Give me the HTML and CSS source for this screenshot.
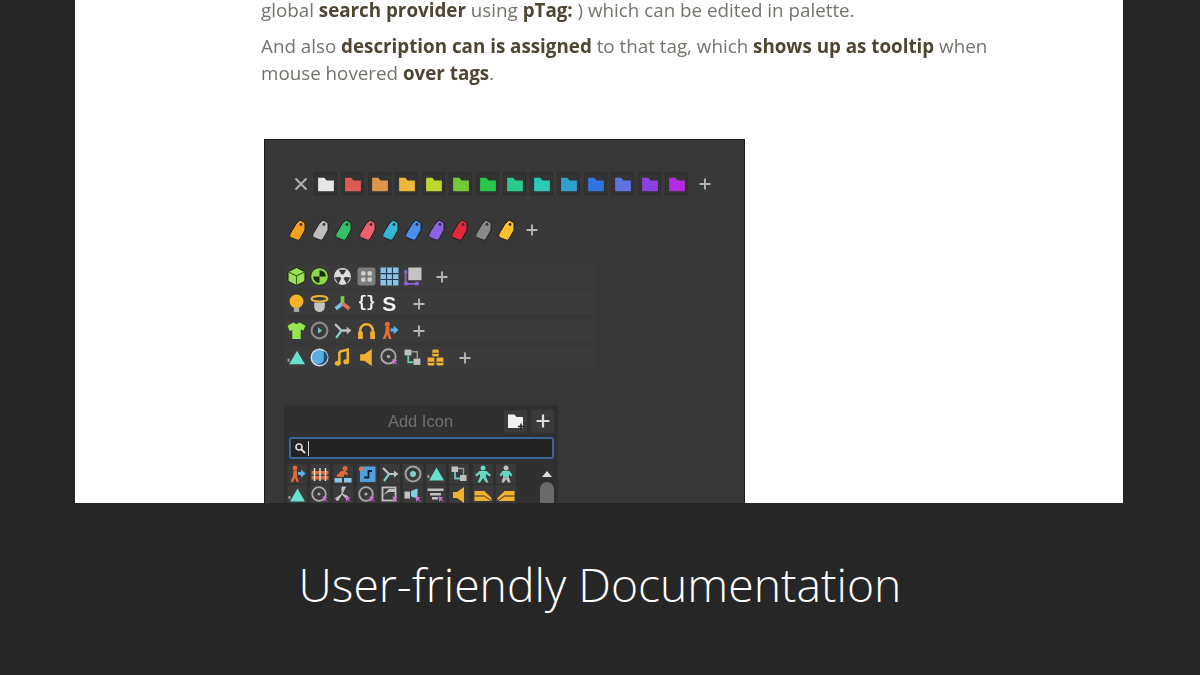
FILE: index.html
```html
<!DOCTYPE html>
<html lang="en">
<head>
<meta charset="utf-8">
<title>User-friendly Documentation</title>
<link rel="stylesheet" href="styles.css">
</head>
<body>
<svg class="defs" width="0" height="0" aria-hidden="true">
  <symbol id="folder" viewBox="0 0 16 16"><path d="M1 2.500h5.500l2 2.400H15V14.500H1z" fill="currentColor"/></symbol>
  <symbol id="tag" viewBox="0 0 20 24"><path d="M13 2l5 3v7l-5 9q-1 1.500-3 1l-6-2.500q-2-1-1-3.500l6-10z" fill="currentColor" stroke="#111" stroke-width=".8"/><circle cx="14" cy="6.500" r="1.400" fill="#333"/></symbol>
  <symbol id="cube" viewBox="0 0 18 18"><path d="M9 .5l8 4v9l-8 4-8-4v-9z" fill="#9be04f" stroke="#111" stroke-width=".8"/><path d="M1 4.500L9 8.500l8-4M9 8.500v9" fill="none" stroke="#35551a" stroke-width="1"/></symbol>
  <symbol id="nuke" viewBox="0 0 18 18"><circle cx="9" cy="9" r="8.300" fill="#8ed64a" stroke="#111" stroke-width=".6"/><path d="M9 9V3a6 6 0 0 1 6 6zM9 9v6a6 6 0 0 1-6-6z" fill="#1d2a14"/></symbol>
  <symbol id="rad" viewBox="0 0 18 18"><circle cx="9" cy="9" r="8" fill="#ddd"/><path d="M9 9L5.500 2.500h7zM9 9l7.500 1-3.500 6zM9 9l-7.500 1 3.500 6z" fill="#3a3a3a"/><circle cx="9" cy="9" r="2.200" fill="#ddd"/></symbol>
  <symbol id="grid4" viewBox="0 0 18 18"><rect x=".5" y=".5" width="17" height="17" rx="2" fill="#7c7c7c"/><rect x="4" y="4" width="4" height="4" rx="1" fill="#cfcfcf"/><rect x="10" y="4" width="4" height="4" rx="1" fill="#cfcfcf"/><rect x="4" y="10" width="4" height="4" rx="1" fill="#cfcfcf"/><rect x="10" y="10" width="4" height="4" rx="1" fill="#cfcfcf"/></symbol>
  <symbol id="grid9" viewBox="0 0 18 18"><rect x=".5" y=".5" width="17" height="17" fill="#8cc4e8"/><path d="M6.200 .5v17M11.800 .5v17M.5 6.200h17M.5 11.800h17" stroke="#1f3a52" stroke-width="1.100"/></symbol>
  <symbol id="corner" viewBox="0 0 18 18"><path d="M2.500 5v11h11" fill="none" stroke="#8a63d2" stroke-width="1.800"/><rect x="1" y="14" width="3.500" height="3.500" fill="#8a63d2"/><rect x="11.500" y="14" width="3.500" height="3.500" fill="#8a63d2"/><rect x="1" y="3" width="3" height="3" fill="#8a63d2"/><rect x="5" y=".5" width="12.500" height="12" fill="#c4c4c4"/></symbol>
  <symbol id="bulb" viewBox="0 0 18 18"><circle cx="9" cy="7" r="6.500" fill="#f5b427"/><rect x="6.500" y="13" width="5" height="4" fill="#aaa"/></symbol>
  <symbol id="halo" viewBox="0 0 18 18"><path d="M4 8h10v4a5 5 0 0 1-10 0z" fill="#c4c4c4"/><ellipse cx="9" cy="4.500" rx="7.500" ry="2.600" fill="none" stroke="#e6b23a" stroke-width="2"/></symbol>
  <symbol id="emit" viewBox="0 0 18 18"><path d="M9 9V2" stroke="#7ec850" stroke-width="3.500"/><path d="M9 9l-6.500 5" stroke="#6fc3e8" stroke-width="3.500"/><path d="M9 9l6.500 5" stroke="#e0705a" stroke-width="3.500"/></symbol>
  <symbol id="shirt" viewBox="0 0 18 18"><path d="M6 1.500l3 1.500 3-1.500 5.500 3-2 4.500-2.500-1v9H5V8.500L2.500 9.500.5 4.500z" fill="#95e64f"/></symbol>
  <symbol id="play" viewBox="0 0 18 18"><circle cx="9" cy="9" r="7.500" fill="none" stroke="#8c8c8c" stroke-width="2"/><path d="M7.500 6l4 3-4 3z" fill="#6fc3c8"/></symbol>
  <symbol id="split" viewBox="0 0 18 18"><path d="M2 3l6 6h6" fill="none" stroke="#c0c0c0" stroke-width="2.200"/><path d="M3 16l5-7" fill="none" stroke="#7fd0c8" stroke-width="2.200"/><path d="M13 5.500l4.500 3.500-4.500 3.500z" fill="#c0c0c0"/></symbol>
  <symbol id="phones" viewBox="0 0 18 18"><path d="M3 12V9a6 6 0 0 1 12 0v3" fill="none" stroke="#f0b030" stroke-width="2.400"/><rect x="1" y="10" width="4.500" height="7" fill="#f0b030"/><rect x="12.500" y="10" width="4.500" height="7" fill="#f0b030"/></symbol>
  <symbol id="runner" viewBox="0 0 18 18"><circle cx="7" cy="3" r="2.400" fill="#e06a3a"/><path d="M5.500 5.500h3.500v6l2 5.500H8.500L7 13l-2 4H2.500L5 11z" fill="#e06a3a"/><path d="M10 7h3V4.500l4.500 4-4.500 4V10h-3z" fill="#59b4e8"/></symbol>
  <symbol id="tri" viewBox="0 0 18 18"><path d="M9.500 2.500l7.500 13H2z" fill="#66e0cc"/><rect x=".5" y="10" width="2" height="3" fill="#999"/></symbol>
  <symbol id="disc" viewBox="0 0 18 18"><circle cx="9" cy="9" r="8.500" fill="#e0e0e0"/><circle cx="9" cy="9" r="7.200" fill="#5aaee4"/><path d="M13 2.500a7 7 0 0 1-7 12.500 7 7 0 0 0 7-3z" fill="#1f4f78"/></symbol>
  <symbol id="note" viewBox="0 0 18 18"><path d="M6 3.500l8-2v11" fill="none" stroke="#f0b030" stroke-width="2.400"/><path d="M6 3.500v11" stroke="#f0b030" stroke-width="2.400"/><ellipse cx="4.500" cy="14.500" rx="2.800" ry="2.400" fill="#f0b030"/><ellipse cx="12.500" cy="13" rx="2.800" ry="2.400" fill="#f0b030"/></symbol>
  <symbol id="speaker" viewBox="0 0 18 18"><path d="M3 6h4l7-5v16l-7-5H3z" fill="#f0b030"/></symbol>
  <symbol id="pinc" viewBox="0 0 18 18"><circle cx="8" cy="8" r="6.800" fill="none" stroke="#aaa" stroke-width="1.800"/><circle cx="8" cy="8" r="1.600" fill="#aaa"/><path d="M11.500 10.500l5 1-2 1.500 2.500 3-3.500-2-1 2.500z" fill="#d070d0"/></symbol>
  <symbol id="nodes" viewBox="0 0 18 18"><rect x="1.500" y="1.500" width="6.500" height="5.500" fill="#c0c0c0"/><rect x="10" y="10" width="6.500" height="6" fill="#c0c0c0"/><path d="M5 7v6.500h5" fill="none" stroke="#66c8b8" stroke-width="1.800"/><path d="M8 3.500h5.500V10" fill="none" stroke="#999" stroke-width="1.400"/></symbol>
  <symbol id="tree" viewBox="0 0 18 18"><rect x="6" y="1.500" width="6" height="6.500" rx="1" fill="#f0b030"/><rect x="1.500" y="9" width="6.500" height="7.500" rx="1" fill="#f0b030"/><rect x="10" y="9" width="6.500" height="7.500" rx="1" fill="#f0b030"/><path d="M2 13.500h5.500M10.500 13.500H16M6.500 5h5" stroke="#333" stroke-width="1"/></symbol>
  <symbol id="fence" viewBox="0 0 18 18"><rect x=".5" y="6" width="17" height="3.500" fill="#e06a3a"/><rect x=".5" y="11" width="17" height="3.500" fill="#e06a3a"/><path d="M3.500 3v13M9 3v13M14.500 3v13" stroke="#e8e0d0" stroke-width="1.500"/></symbol>
  <symbol id="jump" viewBox="0 0 18 18"><circle cx="11" cy="3.500" r="2.500" fill="#e06a3a"/><path d="M2 11l5-5h4.500l3 3-2 1-2-1-1 3H4z" fill="#e06a3a"/><rect x=".5" y="13" width="7.500" height="4.500" fill="#8cc4e8"/><rect x="10" y="13" width="7.500" height="4.500" fill="#8cc4e8"/></symbol>
  <symbol id="bluebox" viewBox="0 0 18 18"><rect x="2" y="1.500" width="15.500" height="15.500" fill="#4fa0dc"/><path d="M6 12.500h4.500V6H14" fill="none" stroke="#123" stroke-width="1.800"/><circle cx="3" cy="4" r="2.200" fill="#e07a50"/></symbol>
  <symbol id="ring" viewBox="0 0 18 18"><circle cx="9" cy="9" r="7.500" fill="none" stroke="#a0a0a0" stroke-width="2"/><circle cx="9" cy="9" r="3" fill="#7fd0c8"/></symbol>
  <symbol id="person" viewBox="0 0 18 18"><circle cx="9" cy="3" r="2.500" fill="#66d8c4"/><path d="M5.500 6h7l4.500 4-1.500 1.500L12 9v3l2.500 5.500h-2.500l-3-4.500-3 4.500H3.500L6 12V9l-3.500 2.500L1 10z" fill="#66d8c4"/></symbol>
  <symbol id="person2" viewBox="0 0 18 18"><circle cx="9" cy="3" r="2.500" fill="#c0c0c0"/><path d="M5.500 6h7l3 4-1.500 1.500L12 9v3.500H6V9l-2 2.500L2.500 10z" fill="#66d8c4"/><path d="M6 12.500h6l1.500 5h-2.500l-2-3.500-2 3.500H4.500z" fill="#c0c0c0"/></symbol>
  <symbol id="fanpin" viewBox="0 0 18 18"><path d="M8 8V1h3.500zM8 8l-6.500 4.500 2 2.500zM8 8l6 2.500-2 2z" fill="#c0c0c0" stroke="#c0c0c0"/><path d="M11.500 10.500l5 1-2 1.500 2.500 3-3.500-2-1 2.500z" fill="#d070d0"/></symbol>
  <symbol id="sqpin" viewBox="0 0 18 18"><rect x="1.500" y="1.500" width="13" height="13" fill="none" stroke="#c0c0c0" stroke-width="1.800"/><path d="M2 9l6-6h6v3H8z" fill="#c0c0c0"/><path d="M11.500 10.500l5 1-2 1.500 2.500 3-3.500-2-1 2.500z" fill="#d070d0"/></symbol>
  <symbol id="campin" viewBox="0 0 18 18"><rect x=".5" y="5.500" width="5.500" height="7" fill="#c0c0c0"/><path d="M7 5l6.500-2.500v10L7 10.500z" fill="#7fd0e0"/><path d="M11.500 10.500l5 1-2 1.500 2.500 3-3.500-2-1 2.500z" fill="#d070d0"/></symbol>
  <symbol id="listpin" viewBox="0 0 18 18"><path d="M.5 2.500h16V5H.5zM3 7h11v2.500H3zM5 11h6v2.500H5z" fill="#c0c0c0"/><path d="M11.500 10.500l5 1-2 1.500 2.500 3-3.500-2-1 2.500z" fill="#d070d0"/></symbol>
  <symbol id="wedge1" viewBox="0 0 18 18"><path d="M.5 5h10l7 7v3H.5z" fill="#f0b030"/><path d="M.5 10h10l7 5" fill="none" stroke="#333" stroke-width="1"/></symbol>
  <symbol id="wedge2" viewBox="0 0 18 18"><path d="M17.500 5h-10l-7 7v3h17z" fill="#f0b030"/><path d="M17.500 10h-10l-7 5" fill="none" stroke="#333" stroke-width="1"/></symbol>
  <symbol id="lens" viewBox="0 0 12 12"><circle cx="5" cy="5" r="3" fill="none" stroke="#ddd" stroke-width="1.600"/><path d="M7 7l4 4" stroke="#ddd" stroke-width="2"/></symbol>
  <symbol id="folderadd" viewBox="0 0 18 18"><path d="M1 2.500h6.500l2 2.500H16v11H1z" fill="#f0f0f0"/><path d="M14 11.500v6M11 14.500h6" stroke="#222" stroke-width="1.600"/></symbol>
  <symbol id="plus" viewBox="0 0 12 12"><path d="M6 .5v11M.5 6h11" stroke="currentColor" stroke-width="1.900"/></symbol>
  <symbol id="cross" viewBox="0 0 14 14"><path d="M1.500 1.500l11 11M12.500 1.500l-11 11" stroke="currentColor" stroke-width="1.900"/></symbol>
</svg>

<main class="page">
  <p class="para para-first">global <b>search provider</b> using <b>pTag:</b> ) which can be edited in palette.</p>
  <p class="para">And also <b>description can is assigned</b> to that tag, which <b>shows up as tooltip</b> when<br>mouse hovered <b>over tags</b>.</p>

  <section class="panel">
    <div class="folders">
      <svg class="cross"><use href="#cross"/></svg>
      <span class="fbox c0"><svg><use href="#folder"/></svg></span>
      <span class="fbox c1"><svg><use href="#folder"/></svg></span>
      <span class="fbox c2"><svg><use href="#folder"/></svg></span>
      <span class="fbox c3"><svg><use href="#folder"/></svg></span>
      <span class="fbox c4"><svg><use href="#folder"/></svg></span>
      <span class="fbox c5"><svg><use href="#folder"/></svg></span>
      <span class="fbox c6"><svg><use href="#folder"/></svg></span>
      <span class="fbox c7"><svg><use href="#folder"/></svg></span>
      <span class="fbox c8"><svg><use href="#folder"/></svg></span>
      <span class="fbox c9"><svg><use href="#folder"/></svg></span>
      <span class="fbox c10"><svg><use href="#folder"/></svg></span>
      <span class="fbox c11"><svg><use href="#folder"/></svg></span>
      <span class="fbox c12"><svg><use href="#folder"/></svg></span>
      <span class="fbox c13"><svg><use href="#folder"/></svg></span>
      <svg class="plus"><use href="#plus"/></svg>
    </div>

    <div class="tags">
      <svg class="t0"><use href="#tag"/></svg>
      <svg class="t1"><use href="#tag"/></svg>
      <svg class="t2"><use href="#tag"/></svg>
      <svg class="t3"><use href="#tag"/></svg>
      <svg class="t4"><use href="#tag"/></svg>
      <svg class="t5"><use href="#tag"/></svg>
      <svg class="t6"><use href="#tag"/></svg>
      <svg class="t7"><use href="#tag"/></svg>
      <svg class="t8"><use href="#tag"/></svg>
      <svg class="t9"><use href="#tag"/></svg>
      <svg class="plus"><use href="#plus"/></svg>
    </div>

    <div class="iconrows">
      <div class="irow">
        <svg class="ic"><use href="#cube"/></svg>
        <svg class="ic"><use href="#nuke"/></svg>
        <svg class="ic"><use href="#rad"/></svg>
        <svg class="ic"><use href="#grid4"/></svg>
        <svg class="ic"><use href="#grid9"/></svg>
        <svg class="ic"><use href="#corner"/></svg>
        <svg class="plus"><use href="#plus"/></svg>
      </div>
      <div class="irow">
        <svg class="ic"><use href="#bulb"/></svg>
        <svg class="ic"><use href="#halo"/></svg>
        <svg class="ic"><use href="#emit"/></svg>
        <span class="ic glyph">{}</span>
        <span class="ic glyph glyph-s">S</span>
        <svg class="plus"><use href="#plus"/></svg>
      </div>
      <div class="irow">
        <svg class="ic"><use href="#shirt"/></svg>
        <svg class="ic"><use href="#play"/></svg>
        <svg class="ic"><use href="#split"/></svg>
        <svg class="ic"><use href="#phones"/></svg>
        <svg class="ic"><use href="#runner"/></svg>
        <svg class="plus"><use href="#plus"/></svg>
      </div>
      <div class="irow">
        <svg class="ic"><use href="#tri"/></svg>
        <svg class="ic"><use href="#disc"/></svg>
        <svg class="ic"><use href="#note"/></svg>
        <svg class="ic"><use href="#speaker"/></svg>
        <svg class="ic"><use href="#pinc"/></svg>
        <svg class="ic"><use href="#nodes"/></svg>
        <svg class="ic"><use href="#tree"/></svg>
        <svg class="plus"><use href="#plus"/></svg>
      </div>
    </div>

    <div class="adder">
      <div class="adder-head">
        <span class="adder-title">Add Icon</span>
        <span class="adder-btn"><svg class="btn-folder"><use href="#folderadd"/></svg></span>
        <span class="adder-btn"><svg class="btn-plus"><use href="#plus"/></svg></span>
      </div>
      <div class="field"><svg class="lens"><use href="#lens"/></svg><span class="caret"></span></div>
      <div class="picker">
        <div class="pgrid">
          <span class="cell"><svg><use href="#runner"/></svg></span>
          <span class="cell"><svg><use href="#fence"/></svg></span>
          <span class="cell"><svg><use href="#jump"/></svg></span>
          <span class="cell"><svg><use href="#bluebox"/></svg></span>
          <span class="cell"><svg><use href="#split"/></svg></span>
          <span class="cell"><svg><use href="#ring"/></svg></span>
          <span class="cell"><svg><use href="#tri"/></svg></span>
          <span class="cell"><svg><use href="#nodes"/></svg></span>
          <span class="cell"><svg><use href="#person"/></svg></span>
          <span class="cell"><svg><use href="#person2"/></svg></span>
          <span class="cell"><svg><use href="#tri"/></svg></span>
          <span class="cell"><svg><use href="#pinc"/></svg></span>
          <span class="cell"><svg><use href="#fanpin"/></svg></span>
          <span class="cell"><svg><use href="#pinc"/></svg></span>
          <span class="cell"><svg><use href="#sqpin"/></svg></span>
          <span class="cell"><svg><use href="#campin"/></svg></span>
          <span class="cell"><svg><use href="#listpin"/></svg></span>
          <span class="cell"><svg><use href="#speaker"/></svg></span>
          <span class="cell"><svg><use href="#wedge1"/></svg></span>
          <span class="cell"><svg><use href="#wedge2"/></svg></span>
        </div>
        <div class="scroll"><span class="scroll-up"></span><span class="scroll-thumb"></span></div>
      </div>
    </div>
  </section>
</main>

<footer class="caption">User-friendly Documentation</footer>
</body>
</html>
```

FILE: styles.css
```css
* { box-sizing: border-box; }
html, body { margin: 0; height: 100%; }
body {
  width: 1200px;
  height: 675px;
  overflow: hidden;
  background: #262626;
  display: flex;
  flex-direction: column;
  align-items: flex-start;
}
.defs { display: block; height: 0; }
.page {
  width: 1048px;
  height: 503px;
  margin-left: 75px;
  flex: none;
  background: #fff;
  overflow: hidden;
  padding-left: 186px;
}
.para {
  margin: 0 0 9px;
  font: 18.8px/27px "Open Sans", sans-serif;
  color: #75726c;
  filter: blur(.5px);
}
.para b { font-weight: 700; color: #4e4632; }
.para-first { margin-top: -3px; }

.panel {
  width: 481px;
  height: 420px;
  margin: 52px 0 0 3px;
  background: #383838;
  border: 1px solid #1c1c1c;
  border-bottom: 0;
  padding: 32px 0 0 19px;
  filter: blur(.6px);
}
.plus { width: 12px; height: 12px; color: #b5b5b5; flex: none; }
.cross { width: 14px; height: 14px; color: #b5b5b5; flex: none; margin-right: 2px; }

.folders { display: flex; align-items: center; gap: 4px; height: 23px; padding-left: 10px; }
.fbox {
  width: 23px;
  height: 23px;
  flex: none;
  display: flex;
  align-items: center;
  justify-content: center;
  background: #333;
  border: 1px solid #2e2e2e;
}
.fbox svg { width: 18px; height: 18px; }
.folders .plus { margin-left: 7px; }
.c0 { color: #e8e8e8; } .c1 { color: #dc5a50; } .c2 { color: #e0954f; } .c3 { color: #eeb93a; }
.c4 { color: #bfd62f; } .c5 { color: #72c934; } .c6 { color: #27c84a; } .c7 { color: #2cc98c; }
.c8 { color: #2cc9b8; } .c9 { color: #2f9fd0; } .c10 { color: #2f74e0; } .c11 { color: #5f74e0; }
.c12 { color: #8a42e0; } .c13 { color: #b42ae0; }

.tags { display: flex; align-items: center; gap: 3.2px; height: 24px; margin-top: 23px; padding-left: 3px; }
.tags svg:not(.plus) { width: 20px; height: 24px; flex: none; }
.tags .plus { margin-left: 7px; }
.t0 { color: #f5a11e; } .t1 { color: #bdbdbd; } .t2 { color: #35bf68; } .t3 { color: #f0606c; }
.t4 { color: #35b4d6; } .t5 { color: #4a8fee; } .t6 { color: #8a62e0; } .t7 { color: #e02a3c; }
.t8 { color: #8a8a8a; } .t9 { color: #f8c22e; }

.iconrows { display: flex; flex-direction: column; gap: 4px; width: 312px; margin-top: 23px; }
.irow { display: flex; align-items: center; gap: 4.2px; height: 23px; padding-left: 3px; background: #3b3b3b; }
.ic { width: 19px; height: 19px; flex: none; }
.glyph {
  display: flex;
  align-items: center;
  justify-content: center;
  font: 700 16px/19px "Liberation Mono", monospace;
  color: #f2f2f2;
  letter-spacing: -1px;
}
.glyph-s { font: 700 21px/19px "Liberation Sans", sans-serif; letter-spacing: 0; }
.irow .plus { margin-left: 10px; }

.adder { width: 274px; height: 120px; margin-top: 36px; background: #303030; padding: 0 4px 0 5px; }
.adder-head { display: flex; align-items: center; gap: 4px; height: 32px; }
.adder-title { flex: 1; text-align: center; font: 16.5px "Liberation Sans", sans-serif; color: #6f6f6f; padding-left: 52px; }
.adder-btn { width: 23px; height: 23px; display: flex; align-items: center; justify-content: center; background: #3a3a3a; }
.btn-folder { width: 18px; height: 18px; }
.btn-plus { width: 14px; height: 14px; color: #dcdcdc; }

.field {
  display: flex;
  align-items: center;
  height: 22px;
  width: 265px;
  padding-left: 3px;
  border: 2px solid #3d6494;
  border-radius: 3px;
  background: #232323;
}
.lens { width: 12px; height: 12px; }
.caret { width: 1px; height: 15px; margin-left: 2px; background: #d5d5d5; }

.picker { display: flex; margin-top: 5px; }
.pgrid {
  display: grid;
  grid-template-columns: repeat(10, 20px);
  align-content: start;
  gap: 1px 3.2px;
  width: 232px;
  margin-left: -2px;
}
.cell { width: 20px; height: 20px; display: flex; align-items: center; justify-content: center; background: #3a3a3a; }
.cell svg { width: 18px; height: 18px; }
.scroll { display: flex; flex-direction: column; align-items: center; gap: 5px; width: 14px; margin-left: 22px; padding-top: 7px; }
.scroll-up { width: 0; height: 0; border: 5px solid transparent; border-top: 0; border-bottom: 6px solid #dcdcdc; }
.scroll-thumb { width: 14px; height: 40px; border-radius: 7px 7px 0 0; background: #6a6a6a; }

.caption {
  flex: 1;
  width: 100%;
  display: flex;
  align-items: center;
  justify-content: center;
  padding-bottom: 10px;
  font: 300 46.3px "Open Sans", sans-serif;
  color: #fff;
}
```
